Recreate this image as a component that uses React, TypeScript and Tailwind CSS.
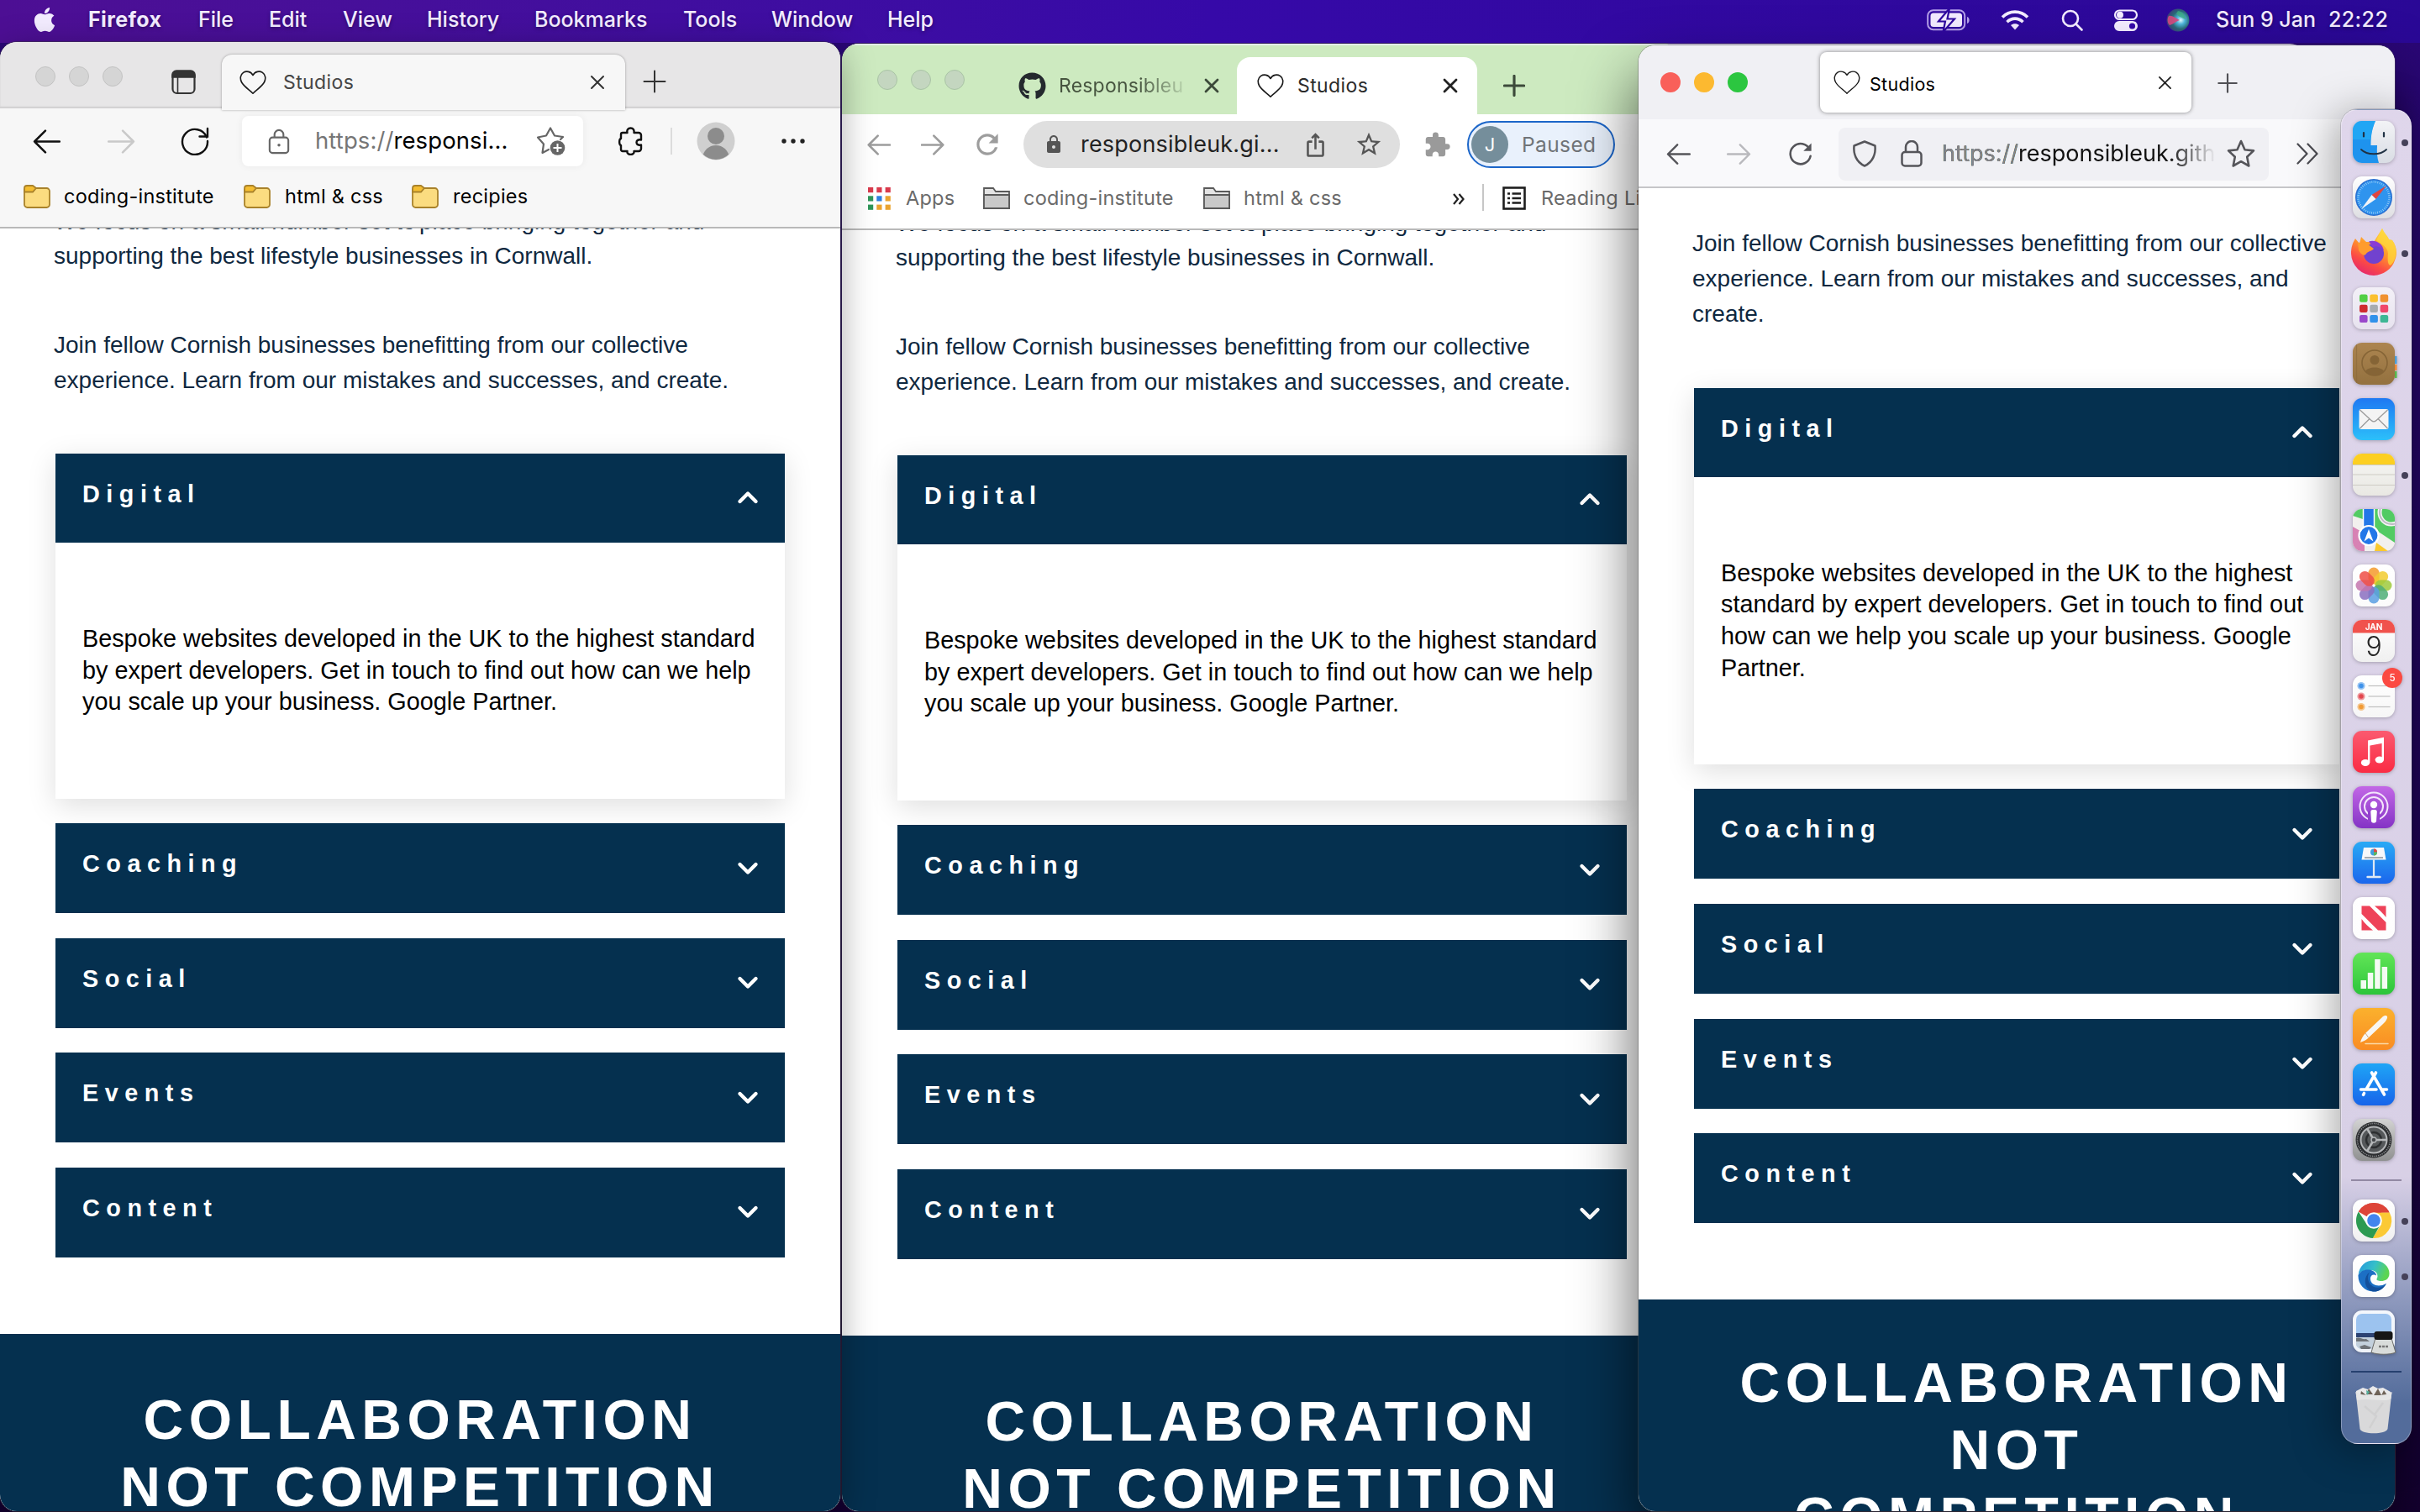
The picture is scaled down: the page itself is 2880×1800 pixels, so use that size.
import React from "react";
import { FaApple, FaGithub } from "react-icons/fa";
import { MdExtension, MdLock, MdIosShare, MdStarBorder, MdRefresh } from "react-icons/md";

type Kids = { children?: React.ReactNode; className?: string };

/* ---------- small line icons ---------- */

function Heart({ className = "", stroke = 1.6 }: { className?: string; stroke?: number }) {
  return (
    <svg viewBox="0 0 32 28" className={className} fill="none" stroke="#1a1a1a" strokeWidth={stroke} strokeLinejoin="round">
      <path d="M16 5.5C13.5 0.8 8 0.2 4.6 2.4C0.8 5 0.4 10 2.6 14C5.5 19.2 11.5 22.6 16 27.2C20.5 22.6 26.5 19.2 29.4 14C31.6 10 31.2 5 27.4 2.4C24 0.2 18.5 0.8 16 5.5Z" />
    </svg>
  );
}

function Arrow({ dir, className = "", w = 2.2 }: { dir: "left" | "right"; className?: string; w?: number }) {
  return (
    <svg viewBox="0 0 32 28" className={className} fill="none" stroke="currentColor" strokeWidth={w} strokeLinecap="round" strokeLinejoin="round">
      {dir === "left" ? <path d="M31 14H2M14.500 1.500L2 14l12.500 12.500" /> : <path d="M1 14h29M17.500 1.500L30 14L17.500 26.500" />}
    </svg>
  );
}

function Cross({ className = "", w = 2.2 }: { className?: string; w?: number }) {
  return (
    <svg viewBox="0 0 18 18" className={className} fill="none" stroke="currentColor" strokeWidth={w} strokeLinecap="round">
      <path d="M2 2l14 14M16 2L2 16" />
    </svg>
  );
}

function Plus({ className = "", w = 2 }: { className?: string; w?: number }) {
  return (
    <svg viewBox="0 0 28 28" className={className} fill="none" stroke="currentColor" strokeWidth={w} strokeLinecap="round">
      <path d="M14 1.500v25M1.500 14h25" />
    </svg>
  );
}

function Lock({ className = "", dot = false, w = 2.200 }: { className?: string; dot?: boolean; w?: number }) {
  return (
    <svg viewBox="0 0 26 32" className={className} fill="none" stroke="currentColor" strokeWidth={w}>
      <path d={dot ? "M7.500 11V7.500a5.500 5.500 0 0111 0V11" : "M6 14V8a7 7 0 0114 0v6"} />
      <rect x="1.500" y={dot ? 11 : 14} width="23" height={dot ? 19 : 16.500} rx="3.500" />
      {dot ? <circle cx="13" cy="20.500" r="1.800" fill="currentColor" stroke="none" /> : null}
    </svg>
  );
}

function Chevron({ up = false }: { up?: boolean }) {
  return (
    <svg viewBox="0 0 26 18" className="h-[18px] w-[26px]" fill="none" stroke="#fff" strokeWidth="4.400" strokeLinecap="round" strokeLinejoin="round">
      {up ? <path d="M3.500 14L13 4.500L22.500 14" /> : <path d="M3.500 4L13 13.500L22.500 4" />}
    </svg>
  );
}

/* ---------- web page shown in each window ---------- */

function Bar({ label, open = false }: { label: string; open?: boolean }) {
  return (
    <div className={`flex items-start justify-between bg-[#05304f] pr-[31px] pl-[32px] ${open ? "h-[106px]" : "h-[107px]"}`}>
      <h3 className="pt-[31px] text-[28.8px] leading-[34px] font-bold tracking-[7.500px] text-white">{label}</h3>
      <div className={open ? "pt-[43px]" : "pt-[44.500px]"}>
        <Chevron up={open} />
      </div>
    </div>
  );
}

function Accordion({ lines }: { lines: string[] }) {
  return (
    <div className="mx-[66px] flex flex-col gap-[29.600px]">
      <div className="bg-white shadow-[0_8px_32px_rgba(0,0,0,0.13)]">
        <Bar label="Digital" open />
        <p className="px-[32px] pt-[96px] pb-[95.500px] text-[28.8px] leading-[37.700px] whitespace-nowrap text-black">
          {lines.map((l) => (
            <span key={l} className="block">{l}</span>
          ))}
        </p>
      </div>
      {["Coaching", "Social", "Events", "Content"].map((l) => (
        <Bar key={l} label={l} />
      ))}
    </div>
  );
}

function Para({ lines, className = "" }: { lines: string[]; className?: string }) {
  return (
    <p className={`px-[64px] text-[28px] leading-[42px] whitespace-nowrap text-[#0f2840] ${className}`}>
      {lines.map((l) => (
        <span key={l} className="block">{l}</span>
      ))}
    </p>
  );
}

function Banner({ lines, className = "" }: { lines: string[]; className?: string }) {
  return (
    <div className={`grow bg-[#05304f] ${className}`}>
      <h2 className="text-center text-[66px] leading-[80px] font-bold tracking-[6.500px] whitespace-nowrap text-white">
        {lines.map((l) => (
          <span key={l} className="block">{l}</span>
        ))}
      </h2>
    </div>
  );
}

const WIDE_CARD = [
  "Bespoke websites developed in the UK to the highest standard",
  "by expert developers. Get in touch to find out how can we help",
  "you scale up your business. Google Partner.",
];

function WidePage() {
  return (
    <div className="flex min-h-0 grow flex-col overflow-hidden bg-white font-['Liberation_Sans',Arial,sans-serif]">
      <div className="-mt-[29px] mb-[-1px] flex shrink-0 px-[64px] text-[28px] leading-[42px] whitespace-nowrap text-[#0f2840]">
        <span className="w-[435px]">We focus on a small number set to</span>
        <span>place bringing together and</span>
      </div>
      <Para lines={["supporting the best lifestyle businesses in Cornwall."]} />
      <Para
        className="mt-[64px] mb-[66px]"
        lines={["Join fellow Cornish businesses benefitting from our collective", "experience. Learn from our mistakes and successes, and create."]}
      />
      <Accordion lines={WIDE_CARD} />
      <Banner className="mt-[91px] pt-[62px]" lines={["COLLABORATION", "NOT COMPETITION"]} />
    </div>
  );
}

/* ---------- menu bar ---------- */

function MenuItem({ children, className = "" }: Kids) {
  return <span className={`whitespace-nowrap ${className}`}>{children}</span>;
}

function MenuBar() {
  return (
    <header className="flex h-[51px] items-center bg-linear-to-r from-[#4d0f94] via-[#3609a8] to-[#2a0896] pb-[4px] font-['Inter',sans-serif] text-[25px] font-medium text-[#f3ecff] [text-shadow:0_2px_4px_rgba(0,0,0,0.35)]">
      <div className="ml-[38px] w-[67px]">
        <FaApple className="h-[33px] w-[30px]" />
      </div>
      <MenuItem className="w-[131px] font-bold tracking-[0.400px]">Firefox</MenuItem>
      <MenuItem className="w-[84px]">File</MenuItem>
      <MenuItem className="w-[88px]">Edit</MenuItem>
      <MenuItem className="w-[100px]">View</MenuItem>
      <MenuItem className="w-[128px]">History</MenuItem>
      <MenuItem className="w-[177px]">Bookmarks</MenuItem>
      <MenuItem className="w-[105px]">Tools</MenuItem>
      <MenuItem className="w-[138px]">Window</MenuItem>
      <MenuItem className="w-[80px]">Help</MenuItem>
      <div className="ml-auto flex items-center">
        <svg viewBox="0 0 52 26" className="h-[26px] w-[52px]" fill="none">
          <rect x="1.200" y="1.200" width="44" height="23" rx="6.500" stroke="#b7a2ea" strokeWidth="2" />
          <rect x="4.500" y="4.500" width="37.500" height="16.500" rx="3.500" fill="#f3ecff" />
          <path d="M48 9c3.500 1 3.500 7 0 8z" fill="#b7a2ea" />
          <path d="M27 -1L14 14.500h8L19.500 27L33 11.500h-8.500z" fill="#f3ecff" stroke="#2f099f" strokeWidth="2.200" />
        </svg>
        <svg viewBox="0 0 34 24" className="ml-[36px] h-[24px] w-[34px]" fill="none" stroke="#f3ecff" strokeWidth="3.600">
          <path d="M2 8.500C10.500 0 23.500 0 32 8.500" />
          <path d="M7.500 14.200C13 8.800 21 8.800 26.500 14.200" />
          <path d="M17 23.500l-5-5.500c3-2.400 7-2.400 10 0z" fill="#f3ecff" stroke="none" />
        </svg>
        <svg viewBox="0 0 26 26" className="ml-[38px] h-[26px] w-[26px]" fill="none" stroke="#f3ecff" strokeWidth="2.600" strokeLinecap="round">
          <circle cx="11" cy="11" r="9" />
          <path d="M17.500 17.500L24.500 24.500" />
        </svg>
        <svg viewBox="0 0 30 26" className="ml-[36px] h-[26px] w-[30px]" fill="none">
          <rect x="2" y="1.500" width="26" height="10.500" rx="5.250" stroke="#f3ecff" strokeWidth="2.200" />
          <circle cx="8" cy="6.750" r="4" fill="#f3ecff" />
          <rect x="1" y="14" width="28" height="12" rx="6" fill="#f3ecff" />
          <circle cx="22.500" cy="20" r="3.600" fill="#3409a8" />
        </svg>
        <svg viewBox="0 0 28 28" className="ml-[33px] h-[28px] w-[28px]">
          <defs>
            <radialGradient id="siri" cx="0.62" cy="0.5" r="0.6">
              <stop offset="0" stopColor="#e8fbff" />
              <stop offset="0.3" stopColor="#4fb7dd" />
              <stop offset="0.65" stopColor="#2a6a78" />
              <stop offset="1" stopColor="#3b3f7d" />
            </radialGradient>
          </defs>
          <circle cx="14" cy="14" r="13.500" fill="url(#siri)" />
          <path d="M3 9C7 8 12 12 16 14C11 16 6 20 4 20C1 17 1 12 3 9Z" fill="#d8487f" opacity="0.9" />
          <path d="M14 3c6 1 9 5 9 10c-4-2-9-3-11-7z" fill="#3fae80" opacity="0.75" />
        </svg>
        <span className="ml-[31px] w-[134px] whitespace-nowrap">Sun 9 Jan</span>
        <span className="mr-[37px] w-[72px] tracking-[0.400px] whitespace-nowrap">22:22</span>
      </div>
    </header>
  );
}

/* ---------- Edge window ---------- */

function YellowFolder() {
  return (
    <svg viewBox="0 0 32 28" className="h-[28px] w-[32px] shrink-0" stroke="#a9822a" strokeWidth="1.800">
      <path d="M1 5.500V23.500a3.500 3.500 0 003.500 3.500H27.500a3.500 3.500 0 003.500-3.500V7.500A3.500 3.500 0 0027.500 4H15z" fill="#fbdc80" />
      <path d="M1 8.500V4a3 3 0 013-3h7l4 3-4 4.500z" fill="#f4bd31" />
    </svg>
  );
}

function EdgeWindow() {
  return (
    <section className="absolute top-[50px] left-0 flex h-[1749px] w-[1000px] flex-col overflow-hidden rounded-[20px] bg-[#f7f7f7] font-['Inter',sans-serif] shadow-[0_0_0_1px_rgba(60,60,60,0.45),0_10px_40px_rgba(0,0,0,0.35)]">
      <div className="flex h-[79px] shrink-0 bg-[#e7e6e7] shadow-[inset_0_-2px_2px_rgba(0,0,0,0.1)]">
        <div className="ml-[42px] flex h-[82px] w-[162px] items-center gap-[16px]">
          {[0, 1, 2].map((i) => (
            <span key={i} className="h-[24px] w-[24px] rounded-full border border-[#c3c3c3] bg-[#d5d5d5]" />
          ))}
        </div>
        <svg viewBox="0 0 30 30" className="mt-[33px] h-[30px] w-[30px]" fill="none">
          <rect x="1.500" y="2" width="26" height="26" rx="5" stroke="#333" strokeWidth="2.200" />
          <path d="M1 9V6a5 5 0 015-5h17a5 5 0 015 5v3zM7.500 8v20" fill="#333" stroke="#333" strokeWidth="1.600" />
        </svg>
        <div className="mt-[15px] ml-[30px] flex h-[66px] w-[480px] items-center rounded-t-[12px] bg-[#f7f7f7] shadow-[0_0_3px_rgba(0,0,0,0.35)]">
          <Heart className="ml-[21px] h-[28px] w-[32px]" />
          <span className="ml-[20px] grow text-[23px] tracking-[0.400px] text-[#464646]">Studios</span>
          <Cross className="mr-[24px] h-[18px] w-[18px] text-[#333]" w={2} />
        </div>
        <Plus className="mt-[33px] ml-[21px] h-[28px] w-[28px] text-[#333]" />
      </div>
      <div className="flex h-[78px] shrink-0 items-center">
        <Arrow dir="left" className="ml-[39px] h-[29px] w-[33px] text-[#111]" w={2.400} />
        <Arrow dir="right" className="ml-[56px] h-[29px] w-[33px] text-[#c9c9c9]" w={2.400} />
        <svg viewBox="0 0 34 34" className="ml-[54px] h-[34px] w-[34px]" fill="none" stroke="#111" strokeWidth="2.400" strokeLinecap="round">
          <path d="M31 12.500A15 15 0 1032 17M32 2v9.500H22.500" />
        </svg>
        <div className="ml-[39px] flex h-[60px] w-[406px] items-center rounded-[8px] bg-white shadow-[0_0_10px_rgba(0,0,0,0.06)]">
          <Lock dot className="ml-[31px] h-[31px] w-[26px] text-[#666]" />
          <span className="ml-[30px] w-[263px] text-[27.500px] tracking-[0.100px] whitespace-nowrap text-black">
            <span className="text-[#767676]">https://</span>responsi...
          </span>
          <svg viewBox="0 0 36 34" className="h-[34px] w-[36px]" fill="none">
            <path d="M32 12l-10-1.500L17 1.500L12 10.500L2 12.500l7 8L7.500 31L15 27M32 12l-3 3" stroke="#666" strokeWidth="2.200" strokeLinecap="round" strokeLinejoin="round" />
            <circle cx="25.500" cy="25" r="8.800" fill="#666" />
            <path d="M25.500 20v10M20.500 25h10" stroke="#fff" strokeWidth="2" />
          </svg>
        </div>
        <svg viewBox="0 0 32 34" className="ml-[41px] h-[34px] w-[32px]" fill="none" stroke="#111" strokeWidth="2.400" strokeLinejoin="round">
          <path d="M6 7h5.500c-.8-3.500 1-5.500 4-5.500S20 3.500 19.500 7H25a3 3 0 013 3v5.500c-3.500-.8-5.500 .8-5.500 3s2 3.800 5.500 3V26a3 3 0 01-3 3h-5.500c.5 2.500-1.500 4-4 4s-4.500-1.500-4-4H6a2 2 0 01-2-2v-5C1.500 21.500 1.500 14.500 4 14V9a2 2 0 012-2z" />
        </svg>
        <span className="ml-[31px] h-[32px] w-[2px] bg-[#dcdcdc]" />
        <svg viewBox="0 0 46 46" className="ml-[29px] h-[46px] w-[46px]">
          <clipPath id="av"><circle cx="23" cy="23" r="22" /></clipPath>
          <circle cx="23" cy="23" r="22.500" fill="#cfcfcf" />
          <circle cx="23" cy="17" r="10" fill="#8c8c8c" />
          <path d="M7 46C6 22 40 22 39 46z" fill="#8c8c8c" clipPath="url(#av)" />
        </svg>
        <svg viewBox="0 0 28 6" className="ml-[55px] h-[6px] w-[28px]" fill="#222">
          <circle cx="3" cy="3" r="2.700" />
          <circle cx="14" cy="3" r="2.700" />
          <circle cx="25" cy="3" r="2.700" />
        </svg>
      </div>
      <div className="flex h-[65px] shrink-0 items-start border-b-2 border-[#b9b9b9] pt-[9px] text-[23.500px] tracking-[0.250px] text-black">
        <div className="ml-[28px] flex w-[262px] items-center gap-[16px]"><YellowFolder /><span className="whitespace-nowrap">coding-institute</span></div>
        <div className="flex w-[200px] items-center gap-[17px]"><YellowFolder /><span className="whitespace-nowrap">html &amp; css</span></div>
        <div className="flex items-center gap-[17px]"><YellowFolder /><span>recipies</span></div>
      </div>
      <WidePage />
    </section>
  );
}

/* ---------- Chrome window ---------- */

function GreyFolder() {
  return (
    <svg viewBox="0 0 32 26" className="h-[26px] w-[32px] shrink-0" stroke="#5a5a5a" strokeWidth="1.800" fill="#c9c9c9">
      <path d="M1 25V1h11l3 4h16v20z" fill="#e4e4e4" />
      <path d="M1 9h30v16H1z" />
    </svg>
  );
}

function ChromeWindow() {
  return (
    <section className="absolute top-[52px] left-[1002px] flex h-[1747px] w-[1000px] flex-col overflow-hidden rounded-[20px] bg-white font-['Inter',sans-serif] shadow-[0_0_0_1px_rgba(60,60,60,0.45)]">
      <div className="flex h-[84px] shrink-0 border-t-2 border-[#e4ecea] bg-[#cdeac0]">
        <div className="ml-[42px] flex h-[82px] w-[168px] items-center gap-[16px]">
          {[0, 1, 2].map((i) => (
            <span key={i} className="h-[24px] w-[24px] rounded-full border border-[#a9c4a5] bg-[#c4d6c0]" />
          ))}
        </div>
        <div className="mt-[14px] flex h-[68px] w-[260px] items-center">
          <FaGithub className="h-[33px] w-[33px] shrink-0 text-[#24292e]" />
          <span className="ml-[15px] w-[158px] overflow-hidden bg-linear-to-r from-[#46543f] from-60% to-[#cdeac0] bg-clip-text text-[23px] tracking-[0.200px] whitespace-nowrap text-transparent">Responsibleu</span>
          <Cross className="ml-[15px] h-[18px] w-[18px] text-[#3c4a3a]" w={2.800} />
        </div>
        <div className="mt-[14px] flex h-[68px] w-[286px] items-center rounded-t-[16px] bg-white">
          <Heart className="ml-[24px] h-[28px] w-[32px]" />
          <span className="ml-[16px] grow text-[23px] tracking-[0.400px] text-[#2b2b2b]">Studios</span>
          <Cross className="mr-[23px] h-[18px] w-[18px] text-[#222]" w={2.800} />
        </div>
        <Plus className="mt-[35px] ml-[31px] h-[26px] w-[26px] text-[#3c4a3a]" w={3.400} />
      </div>
      <div className="flex h-[72px] shrink-0 items-center">
        <Arrow dir="left" className="ml-[30px] h-[25px] w-[28px] text-[#9d9d9d]" w={3} />
        <Arrow dir="right" className="ml-[36px] h-[25px] w-[28px] text-[#9d9d9d]" w={3} />
        <MdRefresh className="ml-[32px] h-[38px] w-[38px] text-[#9d9d9d]" />
        <div className="ml-[24px] flex h-[56px] w-[448px] items-center rounded-full bg-[#dfdfdf]">
          <MdLock className="ml-[24px] h-[24px] w-[24px] text-[#555]" />
          <span className="ml-[20px] w-[264px] text-[27px] tracking-[0.200px] whitespace-nowrap text-[#222]">responsibleuk.gi...</span>
          <MdIosShare className="h-[31px] w-[31px] text-[#555]" />
          <MdStarBorder className="ml-[31px] h-[34px] w-[34px] text-[#555]" />
        </div>
        <MdExtension className="ml-[28px] h-[33px] w-[33px] text-[#9a9a9a]" />
        <div className="ml-[19px] flex h-[56px] w-[176px] items-center rounded-full border-[2.500px] border-[#1c66c9] bg-[#e9f1fc]">
          <span className="ml-[3px] flex h-[44px] w-[44px] shrink-0 items-center justify-center rounded-full bg-[#758e9b] text-[22px] text-white">J</span>
          <span className="ml-[16px] text-[24.500px] tracking-[0.400px] text-[#707478]">Paused</span>
        </div>
      </div>
      <div className="flex h-[66px] shrink-0 items-start border-b-2 border-[#b9b9b9] pt-[10px] text-[23.500px] tracking-[0.250px] whitespace-nowrap text-[#6a6a6a]">
        <div className="ml-[30px] flex w-[138px] items-center">
          <svg viewBox="0 0 28 28" className="mr-[18px] h-[28px] w-[28px]">
            {["#d93a4c", "#d93a4c", "#d93a4c", "#2f9659", "#2d7fe0", "#eaa32f", "#2f9659", "#eaa32f", "#eaa32f"].map((c, i) => (
              <rect key={i} x={1 + (i % 3) * 10.300} y={1 + Math.floor(i / 3) * 10.300} width="6.200" height="6.200" fill={c} />
            ))}
          </svg>
          Apps
        </div>
        <div className="flex w-[262px] items-center gap-[16px]"><GreyFolder />coding-institute</div>
        <div className="flex w-[295px] items-center gap-[16px]"><GreyFolder />html &amp; css</div>
        <svg viewBox="0 0 14 14" className="mt-[12px] ml-[2px] h-[14px] w-[14px]" fill="none" stroke="#222" strokeWidth="2.200"><path d="M1 1l5 6-5 6M7.500 1l5 6-5 6" /></svg>
        <span className="mt-[1px] ml-[21px] h-[32px] w-[2px] bg-[#c6c6c6]" />
        <svg viewBox="0 0 28 28" className="mt-[4px] ml-[22px] h-[28px] w-[28px]" fill="none" stroke="#1e1e1e" strokeWidth="2.600">
          <rect x="1.500" y="1.500" width="25" height="25" />
          <path d="M6 8.500h3M6 14h3M6 19.500h3M11.500 8.500H22M11.500 14H22M11.500 19.500H22" />
        </svg>
        <span className="ml-[18px]">Reading List</span>
      </div>
      <WidePage />
    </section>
  );
}

/* ---------- Firefox window ---------- */

function FirefoxWindow() {
  return (
    <section className="absolute top-[54px] left-[1950px] flex h-[1745px] w-[900px] flex-col overflow-hidden rounded-[20px] bg-[#f9f9fb] font-['Inter',sans-serif] shadow-[0_0_0_1px_rgba(90,90,90,0.4),-4px_36px_70px_rgba(0,0,0,0.6)]">
      <div className="flex h-[88px] shrink-0 bg-[#f0f0f4]">
        <div className="ml-[26px] flex h-[88px] w-[190px] items-center gap-[16px]">
          <span className="h-[24px] w-[24px] rounded-full bg-[#f9605a]" />
          <span className="h-[24px] w-[24px] rounded-full bg-[#fcb930]" />
          <span className="h-[24px] w-[24px] rounded-full bg-[#2cc640]" />
        </div>
        <div className="mt-[8px] flex h-[72px] w-[442px] items-center rounded-[8px] bg-white shadow-[0_0_5px_rgba(0,0,0,0.45)]">
          <Heart className="ml-[16px] h-[28px] w-[32px]" stroke={1.400} />
          <span className="ml-[11px] grow pt-[4px] text-[21.500px] tracking-[0.300px] text-black">Studios</span>
          <Cross className="mr-[23px] h-[17px] w-[17px] text-[#222]" w={1.900} />
        </div>
        <Plus className="mt-[33px] ml-[31px] h-[24px] w-[24px] text-[#505055]" w={2.500} />
      </div>
      <div className="flex h-[82px] shrink-0 items-center border-b-2 border-[#c6c6c8] pt-[2px]">
        <Arrow dir="left" className="ml-[33px] h-[25px] w-[29px] text-[#55555a]" w={2.700} />
        <Arrow dir="right" className="ml-[43px] h-[25px] w-[29px] text-[#b9b9bd]" w={2.700} />
        <svg viewBox="0 0 30 30" className="ml-[44px] h-[28px] w-[30px]" fill="none" stroke="#55555a" strokeWidth="2.700">
          <path d="M26.500 9.500A13 13 0 1027.500 18" strokeLinecap="round" />
          <path d="M28.500 1.500v10h-10z" fill="#55555a" stroke="none" />
        </svg>
        <div className="ml-[30px] flex h-[63px] w-[512px] items-center rounded-[8px] bg-[#f0f0f4]">
          <svg viewBox="0 0 30 32" className="ml-[16px] h-[32px] w-[30px]" fill="none" stroke="#55555a" strokeWidth="2.500" strokeLinejoin="round">
            <path d="M15 1.500L27.500 6.500C28.500 16 25 26 15 30.500C5 26 1.500 16 2.500 6.500Z" />
          </svg>
          <Lock className="ml-[28px] h-[32px] w-[26px] text-[#55555a]" w={2.500} />
          <span className="ml-[23px] w-[326px] overflow-hidden bg-linear-to-r from-[#111] from-82% to-[#f0f0f4] bg-clip-text text-[27px] whitespace-nowrap text-transparent">
            <span className="text-[#85858a]">https://</span>responsibleuk.gith
          </span>
          <svg viewBox="0 0 34 34" className="ml-[13px] h-[34px] w-[34px]" fill="none" stroke="#55555a" strokeWidth="2.600" strokeLinejoin="round">
            <path d="M17 2l4.500 10.200 10.500 1.200-7.800 7.300 2.100 10.800L17 26.200l-9.300 5.300 2.100-10.800L2 13.400l10.500-1.200z" />
          </svg>
        </div>
        <svg viewBox="0 0 26 26" className="ml-[33px] h-[26px] w-[26px]" fill="none" stroke="#4c4c52" strokeWidth="2.200" strokeLinecap="round" strokeLinejoin="round">
          <path d="M1.500 1.500L12.500 13L1.500 24.500M13.500 1.500L24.500 13L13.500 24.500" />
        </svg>
      </div>
      <div className="flex min-h-0 grow flex-col overflow-hidden bg-white font-['Liberation_Sans',Arial,sans-serif]">
        <Para
          className="mt-[44.500px] mb-[67px] px-[63px]"
          lines={["Join fellow Cornish businesses benefitting from our collective", "experience. Learn from our mistakes and successes, and", "create."]}
        />
        <Accordion
          lines={[
            "Bespoke websites developed in the UK to the highest",
            "standard by expert developers. Get in touch to find out",
            "how can we help you scale up your business. Google",
            "Partner.",
          ]}
        />
        <Banner className="mt-[91px] pt-[59px]" lines={["COLLABORATION", "NOT", "COMPETITION"]} />
      </div>
    </section>
  );
}

/* ---------- dock ---------- */

function Tile({ id, from, to, children }: { id: string; from: string; to: string; children?: React.ReactNode }) {
  return (
    <svg viewBox="0 0 50 50" className="h-[50px] w-[50px] shrink-0 overflow-visible drop-shadow-[0_1px_2px_rgba(0,0,0,0.25)]">
      <defs>
        <linearGradient id={`${id}-g`} x1="0" y1="0" x2="0" y2="1">
          <stop offset="0" stopColor={from} />
          <stop offset="1" stopColor={to} />
        </linearGradient>
        <clipPath id={`${id}-c`}><rect width="50" height="50" rx="11" /></clipPath>
      </defs>
      <rect width="50" height="50" rx="11" fill={`url(#${id}-g)`} />
      {children}
    </svg>
  );
}

function Slot({ children, running = false }: { children: React.ReactNode; running?: boolean }) {
  return (
    <div className="relative mb-[16px] h-[50px] w-[50px] shrink-0">
      {children}
      {running ? <span className="absolute top-[22px] left-[58px] h-[8px] w-[8px] rounded-full bg-[#454158]" /> : null}
    </div>
  );
}

const LAUNCH = ["#52cf45", "#fbc02f", "#f0912f", "#cf2b30", "#a7abb0", "#f0476b", "#9a48cb", "#3091ea", "#3eb795"];
const PETALS = ["#f59a2c", "#f2cb30", "#9fca3c", "#4fae77", "#5b9fe2", "#8a6fc0", "#c475ae", "#ee4f45"];

function Dock() {
  return (
    <aside className="absolute top-[130px] left-[2786px] flex h-[1589px] w-[84px] flex-col items-center rounded-[20px] border border-white/30 bg-linear-to-b from-[#dfd6eb] from-0% via-[#d8d0e6] via-80% to-[#536c9b] to-97% pt-[13px] pr-[6px] font-['Inter',sans-serif] shadow-[0_0_0_1px_rgba(40,30,60,0.18),-8px_6px_50px_rgba(0,0,0,0.34)]">
      <Slot running>
        <Tile id="finder" from="#f2f3f6" to="#d9dde4">
          <g clipPath="url(#finder-c)">
            <path d="M0 0H27C23 9 21.500 17 21.500 29H29C28.500 37 29 44 31 50H0Z" fill="#1e93ee" />
            <path d="M0 0H27C23 9 21.500 17 21.500 22H0Z" fill="#22aef6" opacity="0.7" />
          </g>
          <path d="M13 14v4.500M37 14v4.500" stroke="#203244" strokeWidth="2.200" strokeLinecap="round" />
          <path d="M10 34C17 41 33 41 40 34" fill="none" stroke="#203244" strokeWidth="1.800" strokeLinecap="round" />
        </Tile>
      </Slot>
      <Slot>
        <Tile id="safari" from="#ffffff" to="#dedee2">
          <circle cx="25" cy="25" r="22" fill="#2a6fd0" />
          <circle cx="25" cy="25" r="20.500" fill="#2f94ee" />
          <circle cx="25" cy="25" r="18.500" fill="none" stroke="#a9d3f8" strokeWidth="2.600" strokeDasharray="0.700 1.700" />
          <path d="M40 11L22.500 22l5 5z" fill="#e2453f" />
          <path d="M10 39L22.500 22l5 5z" fill="#f2f4f7" />
        </Tile>
      </Slot>
      <Slot running>
        <svg viewBox="0 0 56 56" className="-mt-[4px] -ml-[3px] h-[56px] w-[56px] max-w-none">
          <defs>
            <linearGradient id="fx" x1="0.8" y1="0" x2="0.3" y2="1">
              <stop offset="0" stopColor="#ffe14a" />
              <stop offset="0.45" stopColor="#ff9a2b" />
              <stop offset="0.75" stopColor="#fb4b45" />
              <stop offset="1" stopColor="#e5286d" />
            </linearGradient>
          </defs>
          <path d="M6 12L11 18L13 10L19 16H28L38 0C41 7 44 8 46 13L50 14C56 22 56 31 53 38A28 25 0 0128 56A27 27 0 011 30C1 22 3 17 6 12Z" fill="url(#fx)" />
          <path d="M38 0C41 7 44 8 46 13L50 14C57 24 55 36 49 43C45 46 44 38 45 30C45 22 36 18 31 14Z" fill="#ffd83c" opacity="0.75" />
          <circle cx="28" cy="30" r="12" fill="#7142cf" />
          <path d="M22 15.500C30 13 39 18 40 27C37 22 32 20 27 22Z" fill="#8a3bd6" />
          <path d="M9 17C15 15 21 18 28 24C26 27 21 27 19 30C17 34 12 30 10 26Z" fill="#ff9c2e" />
        </svg>
      </Slot>
      <Slot>
        <Tile id="launch" from="#f3f0f7" to="#e7e3ef">
          {LAUNCH.map((c, i) => (
            <rect key={i} x={8 + (i % 3) * 12.300} y={8.500 + Math.floor(i / 3) * 12.200} width="9.600" height="9.200" rx="2.200" fill={c} />
          ))}
        </Tile>
      </Slot>
      <Slot>
        <Tile id="contacts" from="#ac8550" to="#93713f">
          <path d="M50 16h2.500v9H50z" fill="#4a9ed8" />
          <path d="M50 26h2.500v7H50z" fill="#ef8a35" />
          <path d="M50 34h2.500v8H50z" fill="#56b94c" />
          <path d="M4.500 2v46" stroke="#8a693a" strokeWidth="1.200" opacity="0.6" />
          <circle cx="26" cy="24" r="15" fill="none" stroke="#856436" strokeWidth="1.600" />
          <circle cx="26" cy="20.500" r="5.500" fill="#856436" />
          <path d="M15 34C18 28 34 28 37 34C32 40.500 20 40.500 15 34Z" fill="#856436" />
        </Tile>
      </Slot>
      <Slot>
        <Tile id="mail" from="#1e78f2" to="#2cc0fa">
          <rect x="7.500" y="13" width="35" height="24" rx="2.500" fill="#f4f4f4" />
          <path d="M8.500 14L22 26.500c2 1.800 4 1.800 6 0L41.500 14M8.500 36L19.500 25M41.500 36L30.500 25" fill="none" stroke="#9b9b9b" strokeWidth="1.300" />
        </Tile>
      </Slot>
      <Slot running>
        <Tile id="notes" from="#f6f6f3" to="#e9e8e3">
          <path d="M0 13V11A11 11 0 0111 0H39A11 11 0 0150 11v2z" fill="#fccf21" />
          <path d="M0 13.500h50M0 25h50M0 37.500h50" stroke="#c9c7c0" strokeWidth="0.900" />
        </Tile>
      </Slot>
      <Slot>
        <Tile id="maps" from="#f2f0ee" to="#f2f0ee">
          <g clipPath="url(#maps-c)">
            <path d="M26 0H50V40L26 24z" fill="#52cb63" />
            <path d="M0 0h12v12L0 8z" fill="#52cb63" />
            <circle cx="46" cy="4" r="14" fill="none" stroke="#f3f3f3" strokeWidth="5" />
            <circle cx="46" cy="4" r="14" fill="none" stroke="#bcbcc4" strokeWidth="2" />
            <path d="M0 21l14 8v21H0z" fill="#d782b4" />
            <path d="M28 40l14 10H26z" fill="#fbc92d" />
            <path d="M12.500 0h13v26h-13z" fill="#2377e8" />
            <path d="M12.500 0v26M25.500 0v26" stroke="#fff" strokeWidth="1.500" />
          </g>
          <circle cx="19" cy="31.500" r="11.500" fill="#2377e8" stroke="#fff" strokeWidth="2.200" />
          <path d="M19 24l5.500 14.500L19 34.500l-5.500 4z" fill="#fff" />
        </Tile>
      </Slot>
      <Slot>
        <Tile id="photos" from="#ffffff" to="#fbfbfb">
          {PETALS.map((c, i) => (
            <rect key={i} x="18.500" y="3.500" width="13" height="20" rx="6.500" fill={c} opacity="0.85" transform={`rotate(${i * 45} 25 25)`} />
          ))}
          <circle cx="25" cy="25" r="1.500" fill="#fff" opacity="0.8" />
        </Tile>
      </Slot>
      <Slot>
        <Tile id="cal" from="#ffffff" to="#f0f0f0">
          <path d="M0 15.500V11A11 11 0 0111 0H39A11 11 0 0150 11v4.500z" fill="#f0524d" />
          <text x="25" y="12" textAnchor="middle" fontSize="10" fontWeight="700" fill="#fff">JAN</text>
          <text x="25" y="42.500" textAnchor="middle" fontSize="32" fontWeight="300" fill="#262626">9</text>
        </Tile>
      </Slot>
      <Slot>
        <Tile id="rem" from="#ffffff" to="#f6f6f6">
          {["#3f92ea", "#e2464d", "#f19a35"].map((c, i) => (
            <g key={c}>
              <circle cx="10" cy={12.500 + i * 12.500} r="4.600" fill={c} opacity="0.55" />
              <circle cx="10" cy={12.500 + i * 12.500} r="2.700" fill={c} />
              <path d={`M18.500 ${12.500 + i * 12.500}H44.500`} stroke="#bfbfbf" strokeWidth="1.200" />
            </g>
          ))}
          <circle cx="47" cy="3" r="12" fill="#fb4a42" />
          <text x="47" y="7" textAnchor="middle" fontSize="11.500" fontWeight="500" fill="#fff">5</text>
        </Tile>
      </Slot>
      <Slot>
        <Tile id="music" from="#fb5a6f" to="#fa2c44">
          <path d="M35.800 9v25.500" fill="none" stroke="#fff" strokeWidth="2.400" />
          <path d="M18 11.500L37 7.800V14.500L18 18Z" fill="#fff" />
          <path d="M19.200 13v25" stroke="#fff" strokeWidth="2.400" />
          <ellipse cx="15" cy="38" rx="5.200" ry="4" fill="#fff" />
          <ellipse cx="31.800" cy="34.500" rx="5.200" ry="4" fill="#fff" />
        </Tile>
      </Slot>
      <Slot>
        <Tile id="pod" from="#c267e6" to="#8433c5">
          <circle cx="25" cy="24" r="16.500" fill="none" stroke="#f4e6fb" strokeWidth="2" />
          <circle cx="25" cy="24" r="11" fill="none" stroke="#f4e6fb" strokeWidth="2" />
          <path d="M18 29h14v14H18z" fill="#9440cd" />
          <circle cx="25" cy="22" r="4.200" fill="#fff" />
          <path d="M21.300 30.500a2.500 2.500 0 012.500-2.500h2.500a2.500 2.500 0 012.500 2.500L28 41.500c-.5 3-5.500 3-6 0z" fill="#fff" />
        </Tile>
      </Slot>
      <Slot>
        <Tile id="key" from="#29aaf5" to="#1b66ec">
          <path d="M13 7h24l2.500 14.500H10.500z" fill="#f6f8fa" />
          <path d="M14 19h22" stroke="#55606c" strokeWidth="1" />
          <circle cx="25" cy="12.500" r="4" fill="#3f9fe0" />
          <path d="M25 12.500V8.500A4 4 0 0129 12.500z" fill="#e8493e" />
          <path d="M25 12.500h4A4 4 0 0125 16.500z" fill="#5cb85a" />
          <path d="M25 21.500V41" stroke="#dfe9f4" strokeWidth="2.200" />
          <path d="M17.500 42h15" stroke="#dfe9f4" strokeWidth="2.400" strokeLinecap="round" />
        </Tile>
      </Slot>
      <Slot>
        <Tile id="news" from="#ffffff" to="#fdfdfd">
          <path d="M10.500 10.500H20L39.500 30V39.500H30L10.500 20Z" fill="#ee4259" />
          <path d="M26 10.500H39.500V24C37 20 30 14 26 10.500ZM10.500 26C14 31 19 36 24 39.500H10.500Z" fill="#ee4259" />
        </Tile>
      </Slot>
      <Slot>
        <Tile id="num" from="#62e557" to="#2bc53a">
          <path d="M9.500 33h6.500v10H9.500zM17.800 24h6.500v19h-6.500zM26.200 8h6.500v35h-6.500zM34.600 17h6.500v26h-6.500z" fill="#f4fbf3" />
        </Tile>
      </Slot>
      <Slot>
        <Tile id="pages" from="#fbb12d" to="#f98c23">
          <path d="M9 41C10 37 12 33 15 30L35 11C38 8 42 8.500 41 12C40 15 38 17 36 19L17 37C14 39.500 11 40 9 41Z" fill="#f8f6f3" />
          <path d="M15 30l3.500 5" stroke="#c9a478" strokeWidth="1" />
          <path d="M15 42.500H42" stroke="#fbd9a6" strokeWidth="1.500" strokeLinecap="round" />
        </Tile>
      </Slot>
      <Slot>
        <Tile id="store" from="#1fa5f6" to="#1764ea">
          <path d="M27.500 11L16.500 30M13.500 35.500l-1 1.800M22.500 11L37.500 37M9.500 31H28M35 31h5.500" stroke="#fff" strokeWidth="3.600" strokeLinecap="round" />
        </Tile>
      </Slot>
      <div className="relative h-[50px] w-[50px] shrink-0">
        <Tile id="set" from="#d3d3d3" to="#8f9090">
          <circle cx="25" cy="25" r="21.500" fill="#2b2d2f" />
          <circle cx="25" cy="25" r="19.500" fill="none" stroke="#8d8f91" strokeWidth="1.600" strokeDasharray="1.200 1.200" />
          <circle cx="25" cy="25" r="15.500" fill="#55585a" stroke="#b5b7b9" strokeWidth="2" />
          <circle cx="25" cy="25" r="9" fill="none" stroke="#2c2e30" strokeWidth="2.500" />
          <path d="M25 25L17 11.500M25 25h15.500M25 25L17 38.500" stroke="#b5b7b9" strokeWidth="2.600" />
          <circle cx="25" cy="25" r="3" fill="#44474a" stroke="#b5b7b9" strokeWidth="1.400" />
        </Tile>
      </div>
      <span className="mt-[22px] mb-[22px] ml-[6px] h-[2px] w-[60px] shrink-0 bg-[#9289a3]" />
      <Slot running>
        <Tile id="gc" from="#ffffff" to="#f0f0f0">
          <path d="M25 25L6.800 14.500A21 21 0 0143.200 14.500L34 15.500Z" fill="#dd4438" />
          <path d="M43.800 15.500A21 21 0 0123.500 46L34 29.500L34 15.500z" fill="#fbc934" />
          <path d="M25 25H43.800V15.500H25z" fill="#fbc934" />
          <path d="M6.800 14.500A21 21 0 0023.800 46L32.500 30.500L16 28.500Z" fill="#2c9a52" />
          <path d="M6.800 14.500A21 21 0 0143.200 14.500V15.500H25z" fill="#dd4438" />
          <circle cx="25" cy="25" r="9.800" fill="#fff" />
          <circle cx="25" cy="25" r="7.800" fill="#4285ee" />
        </Tile>
      </Slot>
      <Slot running>
        <Tile id="edge" from="#ffffff" to="#fbfbfb">
          <defs>
            <linearGradient id="eg" x1="0" y1="0" x2="1" y2="0.300">
              <stop offset="0" stopColor="#2396de" />
              <stop offset="0.550" stopColor="#35bfc9" />
              <stop offset="1" stopColor="#5cd552" />
            </linearGradient>
          </defs>
          <path d="M6.500 24C8 12 16 6.500 25 6.500C36 6.500 43.500 14 43.500 22C43.500 29 38 31 34 31C30 31 28 30 28.500 28.500C31 25 29 18 21 18C13 18 8 20 6.500 24Z" fill="url(#eg)" />
          <path d="M6.500 24C9 19 14 17 19 17.500C25 18 28 22 28 24.500C24 22 20.500 25 21 29C21.500 36 31 39 40 34C36 41 30 44 24 43.500C14 43 6 35 6.500 24Z" fill="#1c6fc4" />
          <path d="M20 20.500C17 25 17 33 24 37.500C30 40.500 36 38 40 34C36 41 30 44 24 43.500C13 41 12 26 20 20.500Z" fill="#14509b" />
        </Tile>
      </Slot>
      <Slot>
        <Tile id="prev" from="#f4f7fc" to="#eef2f8">
          <rect x="4" y="4" width="42" height="42" rx="7" fill="#9cc3ef" />
          <path d="M4 27h42v6H4z" fill="#2c4272" />
          <path d="M4 32h42v7a7 7 0 01-7 7H11a7 7 0 01-7-7z" fill="#c3d0dc" />
          <path d="M4 33c4-2 7 2 12 1l4 3H4zM8 43l6-2 8 3-2 2H10z" fill="#4a4a4c" opacity="0.7" />
          <path d="M27 33H46L51 50C44 53 30 53 22 50Z" fill="#d9dcda" stroke="#6b6b68" strokeWidth="1" />
          <rect x="25.500" y="25" width="22" height="10" rx="3" fill="#161616" />
          <path d="M31 43h11" stroke="#777" strokeWidth="2.500" strokeDasharray="3 1" />
        </Tile>
      </Slot>
      <span className="mt-[6px] ml-[6px] h-[2px] w-[60px] shrink-0 bg-[#26406f]" />
      <svg viewBox="0 0 46 58" className="mt-[16px] h-[58px] w-[46px] shrink-0">
        <path d="M2 6L10 2l6 2 6-4 6 3 6-1 9 5v6H2z" fill="#e9e9ea" />
        <path d="M8 6l6 5h-7zM17 3l5 7h-8zM28 3l4 8h-9zM35 5l4 6h-7z" fill="#6e6257" />
        <path d="M14 5l4 2-3 4z" fill="#4fae9b" />
        <path d="M1.500 7C8 13 38 13 44.500 7L39.500 51C38 58 8 58 6.500 51Z" fill="#d9d9da" />
        <path d="M1.500 7C8 13 38 13 44.500 7L43.500 15C36 20 20 14 3 17z" fill="#e6e6e6" />
        <path d="M12 24l14 12-8 14M34 20L24 34" stroke="#d0d0d1" strokeWidth="2.500" fill="none" />
      </svg>
    </aside>
  );
}

export default function App() {
  return (
    <main className="relative h-[1800px] w-[2880px] overflow-hidden bg-linear-to-b from-[#2a0777] via-[#21055c] to-[#140130]">
      <MenuBar />
      <ChromeWindow />
      <div className="absolute top-[52px] left-[1985px] h-[30px] w-[760px] rounded-tr-[20px] bg-[#d6d0e6]" />
      <EdgeWindow />
      <FirefoxWindow />
      <Dock />
    </main>
  );
}
